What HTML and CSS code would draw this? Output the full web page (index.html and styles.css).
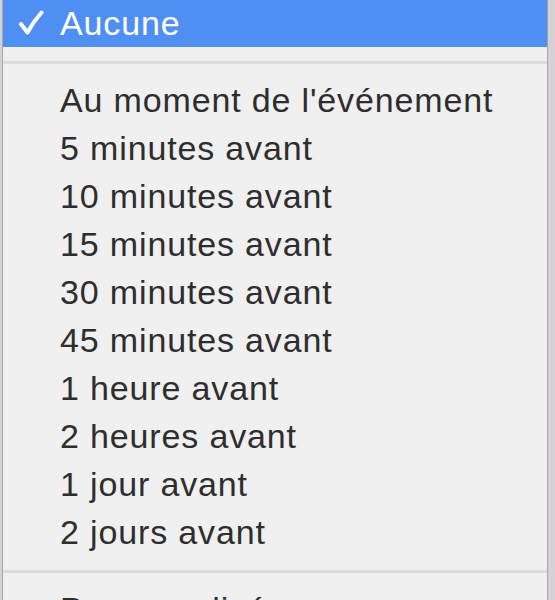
FILE: index.html
```html
<!DOCTYPE html>
<html lang="fr">
<head>
    <meta charset="UTF-8">
    <title>Alerte</title>
    <link rel="stylesheet" href="styles.css">
</head>
<body>
    <div class="menu">
        <div class="item selected">
            <svg class="check" width="26" height="26" viewBox="0 0 26 26">
                <path d="M3 14 L9.5 22.5 Q15 12 23.5 2.5" fill="none" stroke="#ffffff" stroke-width="4" stroke-linecap="round" stroke-linejoin="round"/>
            </svg>
            Aucune
        </div>
        <div class="separator"></div>
        <div class="item">Au moment de l'événement</div>
        <div class="item">5 minutes avant</div>
        <div class="item">10 minutes avant</div>
        <div class="item">15 minutes avant</div>
        <div class="item">30 minutes avant</div>
        <div class="item">45 minutes avant</div>
        <div class="item">1 heure avant</div>
        <div class="item">2 heures avant</div>
        <div class="item">1 jour avant</div>
        <div class="item">2 jours avant</div>
        <div class="separator"></div>
        <div class="item">Personnalisé…</div>
    </div>
</body>
</html>
```

FILE: styles.css
```css
body {
    margin: 0;
    height: 600px;
    overflow: hidden;
    background: #d4d2d7;
    font-family: "Liberation Sans", Arial, sans-serif;
}
.menu {
    margin-left: 2px;
    width: 544px;
    background: #f0f0f0;
    border-left: 1px solid #a9a8ab;
    border-right: 1px solid #a4a3a6;
}
.item {
    height: 48px;
    display: flex;
    align-items: center;
    padding-left: 57px;
    font-size: 34px;
    letter-spacing: 0.85px;
    color: #2e2e2e;
    white-space: nowrap;
}
.selected {
    height: 47px;
    background: #4f8ff2;
    color: #ffffff;
    position: relative;
}
.check {
    position: absolute;
    left: 15px;
    top: 10px;
}
.separator {
    height: 3px;
    margin: 14px 0 12px;
    background: #dcdcdc;
}
```
